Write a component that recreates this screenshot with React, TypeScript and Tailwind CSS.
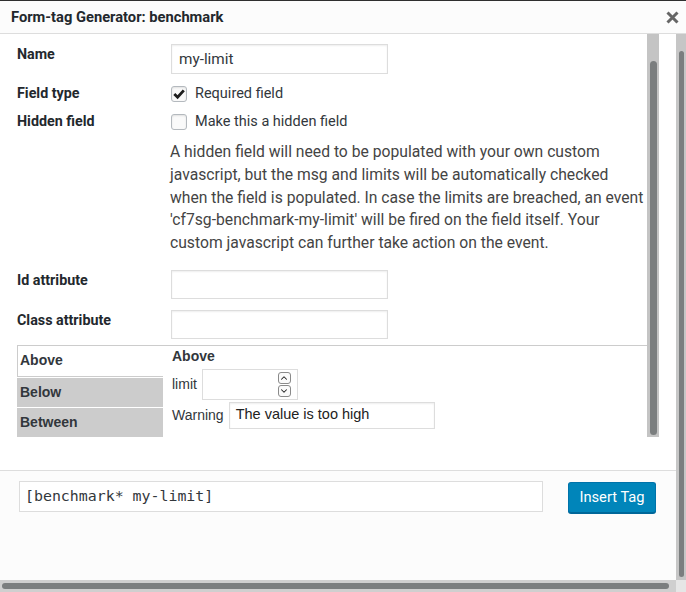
import { ChevronUp, ChevronDown } from 'lucide-react'

const roboto = { fontFamily: 'Roboto, "Liberation Sans", sans-serif' }

function Checkbox({ checked }: { checked?: boolean }) {
  return (
    <span className="w-4 h-4 border border-[#b4b9be] rounded-[3px] bg-[#fafafa] shadow-[inset_0_1px_2px_rgba(0,0,0,0.1)] flex items-center justify-center">
      {checked && (
        <svg width="14" height="14" viewBox="0 0 14 14">
          <path d="M2.3 7 L5.6 10.3 L11.8 3.4" fill="none" stroke="#1e1e1e" strokeWidth="2.8" />
        </svg>
      )}
    </span>
  )
}

function TextInput({ value, className }: { value?: string; className: string }) {
  return (
    <div className={`border border-[#ddd] bg-white shadow-[inset_0_1px_2px_rgba(0,0,0,0.07)] flex items-center ${className}`}>
      {value}
    </div>
  )
}

export default function App() {
  return (
    <div className="w-[686px] h-[592px] flex flex-col bg-white text-[#23282d] overflow-hidden" style={roboto}>
      {/* header */}
      <div className="h-[34px] bg-[#fcfcfc] border-t border-t-[#2f2f2f] border-b border-b-[#ddd] flex items-center justify-between pl-[11px] pr-[7px]">
        <span className="text-[14.7px] font-bold">Form-tag Generator: benchmark</span>
        <svg width="13" height="13" viewBox="0 0 13 13">
          <path d="M1.5 1.5 L11.5 11.5 M11.5 1.5 L1.5 11.5" stroke="#666" strokeWidth="3" />
        </svg>
      </div>

      <div className="flex-1 flex">
        <div className="flex-1 flex flex-col">
          {/* scroll area */}
          <div className="h-[436px] flex">
            <div className="w-[659px] h-[403px] flex">
              <div className="w-[647px] flex flex-col pl-[17px] text-[14.3px]">
                <div className="flex mt-[10px]">
                  <span className="w-[154px] font-bold leading-5">Name</span>
                  <TextInput value="my-limit" className="w-[217px] h-[30px] pl-[7px] text-[15.3px] text-[#32373c]" />
                </div>
                <div className="flex items-center mt-[10px] h-5">
                  <span className="w-[154px] font-bold">Field type</span>
                  <Checkbox checked />
                  <span className="ml-2 text-[14.5px] text-[#32373c]">Required field</span>
                </div>
                <div className="flex items-center mt-2 h-5">
                  <span className="w-[154px] font-bold">Hidden field</span>
                  <Checkbox />
                  <span className="ml-2 text-[14.5px] text-[#32373c]">Make this a hidden field</span>
                </div>
                <p className="ml-[153px] mt-[9px] w-[476px] text-[15.7px] leading-[22.75px] text-[#444]">
                  A hidden field will need to be populated with your own custom javascript, but the msg and limits will be automatically checked when the field is populated. In case the limits are breached, an event 'cf7sg-benchmark-my-limit' will be fired on the field itself. Your custom javascript can further take action on the event.
                </p>
                <div className="flex mt-[15px]">
                  <span className="w-[154px] font-bold leading-5">Id attribute</span>
                  <TextInput className="w-[217px] h-[29px]" />
                </div>
                <div className="flex mt-[11px]">
                  <span className="w-[154px] font-bold leading-5">Class attribute</span>
                  <TextInput className="w-[217px] h-[29px]" />
                </div>

                {/* tabs */}
                <div className="mt-[6px] border-t border-[#ccc] flex h-[92px] text-[14px]" style={{ fontFamily: '"Liberation Sans", Arial, sans-serif' }}>
                  <div className="w-[146px] flex flex-col font-bold text-[#32373c]">
                    <div className="h-[31px] bg-white border-l border-b border-[#ccc] flex items-center pl-[2px]">Above</div>
                    <div className="h-[29px] mt-px bg-[#ccc] flex items-center pl-[3px]">Below</div>
                    <div className="h-[29px] mt-px bg-[#ccc] flex items-center pl-[3px]">Between</div>
                  </div>
                  <div className="flex-1 flex flex-col pl-[9px] text-[#32373c]">
                    <div className="font-bold leading-5">Above</div>
                    <div className="flex items-center mt-[3px]">
                      <span>limit</span>
                      <div className="ml-[5px] w-[96px] h-[31px] border border-[#ddd] bg-white flex items-center justify-end pr-[6px]">
                        <div className="flex flex-col gap-px">
                          <span className="w-[13px] h-3 border border-[#8a8a8a] rounded-[3px] flex items-center justify-center bg-[#fafafa]">
                            <ChevronUp size={10} strokeWidth={2.5} color="#222" />
                          </span>
                          <span className="w-[13px] h-3 border border-[#8a8a8a] rounded-[3px] flex items-center justify-center bg-[#fafafa]">
                            <ChevronDown size={10} strokeWidth={2.5} color="#222" />
                          </span>
                        </div>
                      </div>
                    </div>
                    <div className="flex items-center mt-[2px]">
                      <span>Warning</span>
                      <TextInput value="The value is too high" className="ml-[5px] w-[206px] h-[27px] pl-[6px] text-[14.5px] text-[#222]" />
                    </div>
                  </div>
                </div>
              </div>
              {/* inner scrollbar */}
              <div className="w-3 bg-[#c4c4c4] flex flex-col items-center pt-[27px] pb-[2px]">
                <div className="w-[7px] flex-1 bg-[#7b7e7f] rounded-full" />
              </div>
            </div>
          </div>

          {/* footer */}
          <div className="flex-1 bg-[#fcfcfc] border-t border-[#ddd] flex items-start pt-[10px] pl-[19px]">
            <div
              className="w-[524px] h-[31px] border border-[#ddd] bg-white flex items-center pl-[5px] text-[14.9px] text-[#32373c]"
              style={{ fontFamily: '"DejaVu Sans Mono", monospace' }}
            >
              [benchmark* my-limit]
            </div>
            <button className="ml-[25px] mt-px w-[88px] h-[31px] bg-[#0085ba] border border-[#0073aa] border-b-[#006799] rounded-[3px] shadow-[0_1px_0_#006799] text-white text-[14.7px]">
              Insert Tag
            </button>
          </div>

          {/* horizontal scrollbar */}
          <div className="h-3 bg-[#cfcfcf] flex items-center px-[2px] pr-[7px]">
            <div className="h-[6px] flex-1 bg-[#7b7e7f] rounded-full" />
          </div>
        </div>

        {/* outer scrollbar */}
        <div className="w-[10px] flex flex-col">
          <div className="flex-1 bg-[#c6c6c6] flex justify-center pt-[17px] pb-[3px]">
            <div className="w-[5px] bg-[#7b7e7f] rounded-full" />
          </div>
          <div className="h-3 bg-[#e6e6e6]" />
        </div>
      </div>
    </div>
  )
}
